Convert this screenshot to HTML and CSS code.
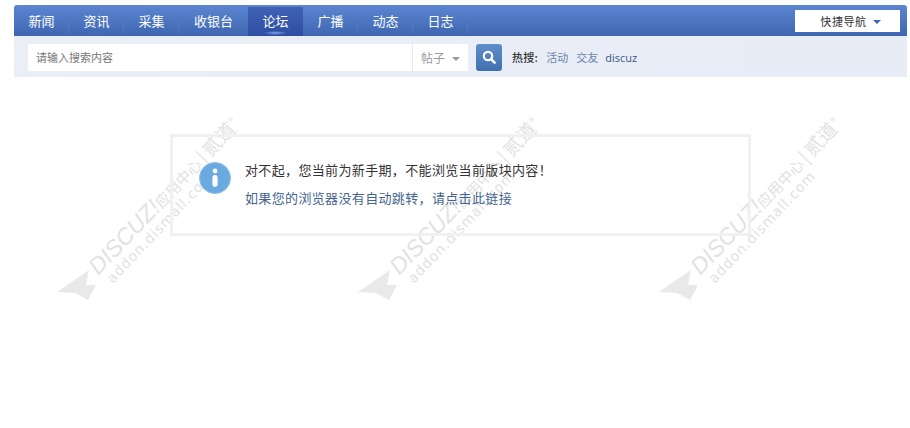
FILE: index.html
```html
<!DOCTYPE html>
<html lang="zh-CN">
<head>
    <meta charset="UTF-8">
    <title>提示信息</title>
    <link rel="stylesheet" href="styles.css">
</head>
<body>
    <div class="header">
        <div class="nav">
            <ul class="nav-list">
                <li><a href="#">新闻</a></li>
                <li><a href="#">资讯</a></li>
                <li><a href="#">采集</a></li>
                <li class="wide"><a href="#">收银台</a></li>
                <li class="active"><a href="#">论坛</a></li>
                <li><a href="#">广播</a></li>
                <li><a href="#">动态</a></li>
                <li><a href="#">日志</a></li>
            </ul>
            <a class="quick-nav" href="#">快捷导航 <span class="caret caret-blue"></span></a>
        </div>
        <div class="search-bar">
            <div class="search-box">
                <span class="placeholder">请输入搜索内容</span>
                <span class="search-type">帖子 <span class="caret"></span></span>
            </div>
            <button class="search-btn" type="button">
                <svg width="16" height="16" viewBox="0 0 16 16">
                    <circle cx="7" cy="7" r="4.2" fill="none" stroke="#fff" stroke-width="2.2"/>
                    <path d="M10 10l3.6 3.6" stroke="#fff" stroke-width="2.6" stroke-linecap="round"/>
                </svg>
            </button>
            <div class="hot">
                <strong>热搜:</strong>
                <a href="#">活动</a>
                <a href="#">交友</a>
                <a class="latin" href="#">discuz</a>
            </div>
        </div>
    </div>

    <div class="message">
        <svg class="info-icon" width="32" height="32" viewBox="0 0 32 32">
            <circle cx="16" cy="16" r="15.5" fill="#6aaae0" stroke="#8dbde6"/>
            <circle cx="16" cy="9" r="2.4" fill="#fff"/>
            <rect x="13.4" y="13" width="5.2" height="12" rx="2.4" fill="#fff"/>
        </svg>
        <div class="message-text">
            <p>对不起，您当前为新手期，不能浏览当前版块内容！</p>
            <p><a href="#">如果您的浏览器没有自动跳转，请点击此链接</a></p>
        </div>
    </div>

    <div class="watermarks">
        <div class="stamp stamp-1">
            <svg class="plane" width="42" height="34" viewBox="0 0 42 34"><path d="M0 26L32 4 29 19 39 19 31 34 18 27z" fill="#e9e9e9"/></svg>
            <div class="stamp-text"><div class="brand"><i>DISCUZ!</i>应用中心<span class="bar">|</span><span class="mark">贰道</span><sup>®</sup></div><div class="domain">addon.dismall.com</div></div>
        </div>
        <div class="stamp stamp-2">
            <svg class="plane" width="42" height="34" viewBox="0 0 42 34"><path d="M0 26L32 4 29 19 39 19 31 34 18 27z" fill="#e9e9e9"/></svg>
            <div class="stamp-text"><div class="brand"><i>DISCUZ!</i>应用中心<span class="bar">|</span><span class="mark">贰道</span><sup>®</sup></div><div class="domain">addon.dismall.com</div></div>
        </div>
        <div class="stamp stamp-3">
            <svg class="plane" width="42" height="34" viewBox="0 0 42 34"><path d="M0 26L32 4 29 19 39 19 31 34 18 27z" fill="#e9e9e9"/></svg>
            <div class="stamp-text"><div class="brand"><i>DISCUZ!</i>应用中心<span class="bar">|</span><span class="mark">贰道</span><sup>®</sup></div><div class="domain">addon.dismall.com</div></div>
        </div>
    </div>
</body>
</html>
```

FILE: styles.css
```css
* {
    margin: 0;
    padding: 0;
    box-sizing: border-box;
}

body {
    font-family: "Noto Sans CJK SC", "Liberation Sans", sans-serif;
    font-size: 12px;
    background: #fff;
    color: #333;
    height: 428px;
    overflow: hidden;
    position: relative;
}

a {
    text-decoration: none;
}

ul {
    list-style: none;
}

.header {
    width: 893px;
    margin: 5px 0 0 14px;
}

.nav {
    height: 31px;
    display: flex;
    justify-content: space-between;
    align-items: center;
    padding-right: 7px;
    background: linear-gradient(#5c86d2, #3f66b0);
    border-radius: 3px 3px 0 0;
}

.nav-list {
    display: flex;
    height: 31px;
    align-items: stretch;
    padding-top: 2px;
}

.nav-list li {
    width: 55px;
    display: flex;
    align-items: center;
    justify-content: center;
    font-size: 13px;
    padding-bottom: 2px;
    background: linear-gradient(#4f79c3, #4f79c3) right 4px / 1px 22px no-repeat;
}

.nav-list li.wide {
    width: 69px;
    background: none;
}

.nav-list li.active {
    background: radial-gradient(ellipse 12px 2px at 50% 26px, #7fa6ea, transparent),
        linear-gradient(#3f62b4, #2f4ea3);
}

.nav-list li a {
    color: #fff;
}

.quick-nav {
    width: 105px;
    height: 22px;
    background: #fff;
    color: #333;
    font-size: 11px;
    letter-spacing: 0.6px;
    display: flex;
    align-items: center;
    justify-content: center;
    gap: 2px;
    padding-left: 6px;
}

.caret {
    display: inline-block;
    width: 0;
    height: 0;
    border-left: 4px solid transparent;
    border-right: 4px solid transparent;
    border-top: 4px solid #999;
    margin-left: 4px;
    vertical-align: middle;
}

.caret-blue {
    border-top-color: #3f66b0;
    margin-top: 2px;
}

.search-bar {
    height: 41px;
    background: linear-gradient(90deg, #e9eef7, #e7ecf6);
    display: flex;
    align-items: center;
    padding: 1px 0 0 14px;
}

.search-box {
    width: 440px;
    height: 27px;
    background: #fff;
    display: flex;
    justify-content: space-between;
    align-items: center;
    color: #777;
    font-size: 11px;
}

.placeholder {
    padding-left: 8px;
}

.search-type {
    width: 56px;
    height: 27px;
    border-left: 1px solid #e8e8e8;
    line-height: 27px;
    padding-left: 8px;
    font-size: 12px;
    color: #999;
}

.search-btn {
    width: 26px;
    height: 27px;
    margin-left: 8px;
    border: none;
    border-radius: 3px;
    background: linear-gradient(#5f8ecb, #3f70ae);
    display: flex;
    align-items: center;
    justify-content: center;
}

.hot {
    margin-left: 10px;
    display: flex;
    gap: 8px;
    font-size: 11px;
    align-items: center;
}

.hot strong {
    color: #333;
    font-weight: 500;
    letter-spacing: 0.3px;
}

.hot a {
    color: #6b87ad;
}

.hot a.latin {
    color: #3d5680;
    margin-left: -1px;
    font-family: "Open Sans", "Liberation Sans", sans-serif;
}

.message {
    width: 581px;
    height: 102px;
    margin: 57px 0 0 170px;
    border: 3px solid #f1f1f1;
    display: flex;
    padding: 25px 0 0 26px;
    position: relative;
    z-index: 1;
}

.info-icon {
    flex: none;
}

.message-text {
    margin-left: 14px;
    font-size: 13px;
    line-height: 28px;
    letter-spacing: 0.35px;
    margin-top: -6px;
}

.message-text a {
    color: #44648f;
}

/* stamp overlay, repeats every 301px */
.watermarks {
    position: absolute;
    inset: 0;
    pointer-events: none;
}

.stamp {
    position: absolute;
    top: 110px;
    width: 210px;
    height: 195px;
}

.stamp-1 { left: 57px; }
.stamp-2 { left: 358px; }
.stamp-3 { left: 659px; }

.plane {
    position: absolute;
    left: 0;
    bottom: 5px;
}

.stamp-text {
    position: absolute;
    left: 41px;
    top: 146px;
    width: 240px;
    transform: rotate(-46.5deg);
    transform-origin: 0 50%;
    color: #e2e2e2;
    white-space: nowrap;
}

.brand {
    font-size: 15px;
    line-height: 20px;
}

.brand i {
    font-family: "Liberation Sans", sans-serif;
    font-size: 23px;
}

.bar {
    font-size: 18px;
    margin: 0 3px;
}

.mark {
    font-size: 19px;
}

.brand sup {
    font-size: 10px;
    margin-left: 1px;
}

.domain {
    font-family: "DejaVu Sans", sans-serif;
    font-size: 14px;
    line-height: 15px;
    letter-spacing: 0.9px;
    margin-left: 4px;
}
```
